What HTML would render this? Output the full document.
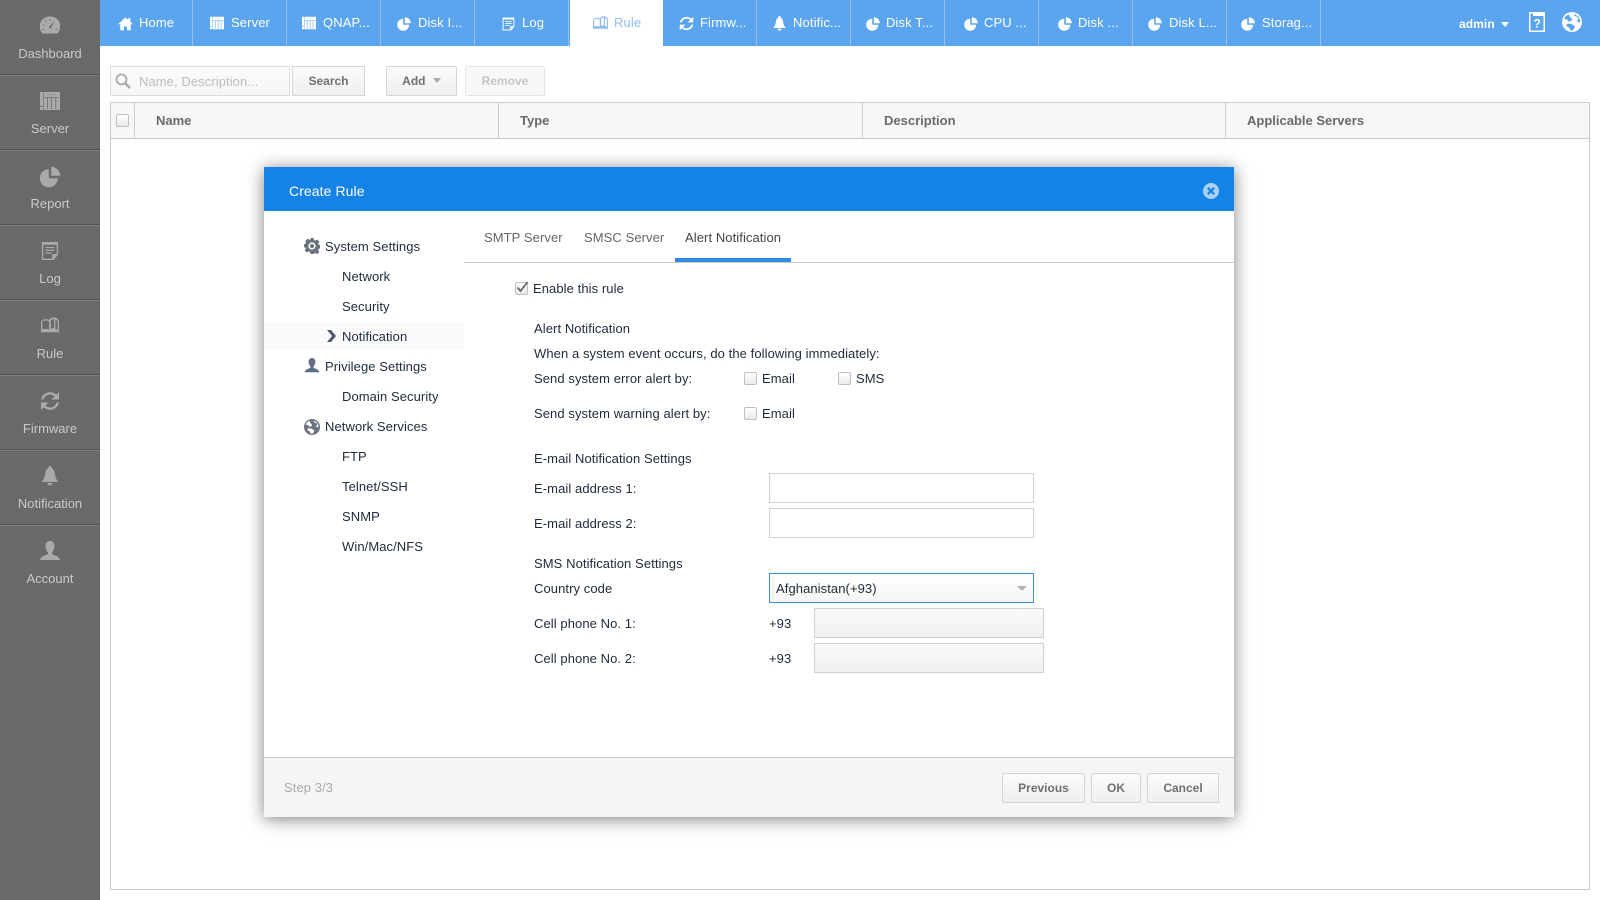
<!DOCTYPE html>
<html><head><meta charset="utf-8"><title>Create Rule</title>
<style>
html,body{margin:0;padding:0}
body{width:1600px;height:900px;overflow:hidden;position:relative;background:#fff;font:13px/20px "Liberation Sans",Arial,sans-serif;color:#222}
.a,.t{position:absolute;white-space:nowrap}
.t{height:20px;line-height:20px;margin-top:1px;letter-spacing:.08px}
svg{position:absolute;fill:currentColor;display:block}
#side{left:0;top:0;width:100px;height:900px;background:#6b6b6b;background-image:repeating-linear-gradient(45deg,rgba(0,0,0,.025) 0 1px,transparent 1px 2px)}
.sep{position:absolute;left:0;width:100px;height:1px;background:#525252;border-bottom:1px solid #7d7d7d}
.sl{position:absolute;left:0;width:100px;text-align:center;color:#c9c9c9;font-size:13px;line-height:20px;margin-top:1px}
.si{color:#aaa}
#top{left:100px;top:0;width:1500px;height:46px;background:#5aa5ee}
.ts{position:absolute;top:0;width:1px;height:46px;background:#8fc0ec}
.tt{color:#fff;font-size:13px;top:13px;margin-top:0;letter-spacing:.12px}
.ti{color:#fff}
.btn{position:absolute;box-sizing:border-box;height:30px;border:1px solid #d5d5d5;border-radius:2px;background:linear-gradient(#fbfbfb,#efefef);text-align:center;font-weight:bold;font-size:12px;line-height:28px;color:#707070}
.cb{position:absolute;box-sizing:border-box;width:13px;height:13px;border:1px solid #c0c0c0;border-radius:2px;background:linear-gradient(#fff,#eaeaea)}
.inp{position:absolute;box-sizing:border-box;height:30px;border:1px solid #d0d0d0;background:#fff}
.gr{background:linear-gradient(#fafafa,#f0f0f0)}
.th{font-weight:bold;color:#6a6a6a;top:110px;letter-spacing:0}
.n{color:#1f2a3a}
</style></head><body>
<svg width="0" height="0" style="position:absolute">
<defs>
<symbol id="pie" viewBox="0 0 20 20"><path d="M9 3.500a7.500 7.500 0 1 0 7.500 7.500H9z"/><path d="M11 1.500a7.500 7.500 0 0 1 7.500 7.500H11z"/></symbol>
<symbol id="srv" viewBox="0 0 20 20"><path fill-rule="evenodd" d="M0 1h20v18H0zM3 1v18h.6V1zM4 6v.8h15V6zM7 7v11h.8V7zM11.2 7v11h.8V7zM15.4 7v11h.8V7zM0 15v.8h3V15zM8 3v.8h1V3zM11 3v.8h1V3zM14 3v.8h1V3z"/></symbol>
<symbol id="log" viewBox="0 0 20 20"><path fill-rule="evenodd" d="M1 0h18v14l-5 6H1zM2.500 3v15.500h10V13.500h5V3zM5 5.500h10v1.300H5zM5 8.500h10v1.300H5zM5 11.500h7v1.300H5z"/></symbol>
<symbol id="book" viewBox="0 0 20 20"><path fill-rule="evenodd" d="M0 17V6q0-3 4-3.500T9.500 4V2q3-2 6-1.500t4.500 4V17zM1.500 14q4-1.500 7.500 0V5Q6.500 3.500 3.500 4T1.500 6.500zM11 13q2-.8 3.500-.5V2.500Q12.500 2 11 3.500zM16 3v10.500l2.500.7V6q0-2.500-2.500-3z"/></symbol>
<symbol id="ref" viewBox="0 0 20 20"><path d="M17 6.500A8 8 0 0 0 2.200 8.500M3 13.500A8 8 0 0 0 17.800 11.500" fill="none" stroke="currentColor" stroke-width="2.400"/><path d="M19 1v7.500h-7.500zM1 19v-7.500h7.500z"/></symbol>
<symbol id="bell" viewBox="0 0 20 20"><path d="M10 0a1.500 1.500 0 0 1 1.500 2C14 3 14.500 6 15 9s2 5.500 3.500 7h-17C3 14.500 4.500 12 5 9s1-6 3.500-7A1.500 1.500 0 0 1 10 0z"/><path d="M7.500 17h5a2.500 2.500 0 0 1-5 0z"/></symbol>
<symbol id="usr" viewBox="0 0 20 20"><path d="M10 0c3 0 4.500 2.200 4.500 5s-1.500 5.500-2.500 6.500v1.500c2.500 1.500 7 2 8 6H0c1-4 5.500-4.500 8-6v-1.500C7 10.500 5.500 7.800 5.500 5S7 0 10 0z"/></symbol>
<symbol id="gau" viewBox="0 0 20 20"><path fill-rule="evenodd" d="M10 .5a10 10 0 0 1 7.500 17h-15A10 10 0 0 1 10 .5zM14.800 4.500L8.800 11.500l1.800 1.300zM9.600 3v2h.8V3zM5 4.800l1 1.600.7-.4-1-1.600zM2.800 9l1.800.8.3-.7-1.800-.8zM2.500 13v.8h2V13zM15.500 13v.8h2V13z"/></symbol>
<symbol id="home" viewBox="0 0 20 20"><path d="M10 2L0 11h3v8h5v-5h4v5h5v-8h3l-3.500-3.200V3h-3v2.100z"/></symbol>
<symbol id="gear" viewBox="0 0 20 20"><path fill-rule="evenodd" d="M8 0h4l.5 2.600 1.700.7L16.400 1.800l2.800 2.800-1.500 2.200.7 1.700 2.600.5v4l-2.600.5-.7 1.700 1.500 2.200-2.800 2.800-2.200-1.500-1.700.7L12 20H8l-.5-2.600-1.700-.7-2.200 1.500-2.800-2.800 1.500-2.200-.7-1.700L-1 12V8l2.600-.5.7-1.700L1.800 3.600l2.800-2.800 2.200 1.500 1.700-.7zM10 5.500a4.500 4.500 0 1 0 0 9 4.500 4.500 0 0 0 0-9zM10 7.500a2.500 2.500 0 1 1 0 5 2.500 2.500 0 0 1 0-5z"/></symbol>
<symbol id="glb" viewBox="0 0 20 20"><path fill-rule="evenodd" d="M10 0a10 10 0 1 1 0 20 10 10 0 0 1 0-20zM7 2.200Q3.500 3.500 2 7l3 .5 1.500 2 3-.5.500-2.500L8 5.500zM12 2l.5 2 3 1 1 2.500-2 1.500 2.500 1.500 1-.5Q18.500 4.500 12 2zM6 11.500Q4 12 4.500 14l3 2 1 2.500q2.500.5 3-1l1.500-3-3.500-2.500z"/></symbol>
</defs></svg>

<div id="side" class="a">
<div class="sep" style="top:74px"></div><div class="sep" style="top:149px"></div><div class="sep" style="top:224px"></div><div class="sep" style="top:299px"></div><div class="sep" style="top:374px"></div><div class="sep" style="top:449px"></div><div class="sep" style="top:524px"></div>
<svg class="si" style="left:40px;top:16px" width="20" height="20"><use href="#gau"/></svg><div class="sl" style="top:43px">Dashboard</div>
<svg class="si" style="left:40px;top:91px" width="20" height="20"><use href="#srv"/></svg><div class="sl" style="top:118px">Server</div>
<svg class="si" style="left:38px;top:165px" width="24" height="24"><use href="#pie"/></svg><div class="sl" style="top:193px">Report</div>
<svg class="si" style="left:41px;top:241px" width="18" height="20"><use href="#log"/></svg><div class="sl" style="top:268px">Log</div>
<svg class="si" style="left:40px;top:317px" width="20" height="18"><use href="#book"/></svg><div class="sl" style="top:343px">Rule</div>
<svg class="si" style="left:40px;top:391px" width="20" height="20"><use href="#ref"/></svg><div class="sl" style="top:418px">Firmware</div>
<svg class="si" style="left:40px;top:466px" width="20" height="20"><use href="#bell"/></svg><div class="sl" style="top:493px">Notification</div>
<svg class="si" style="left:40px;top:541px" width="20" height="20"><use href="#usr"/></svg><div class="sl" style="top:568px">Account</div>
</div>

<div id="top" class="a"></div>
<div class="ts" style="left:192px"></div><div class="ts" style="left:286px"></div><div class="ts" style="left:380px"></div><div class="ts" style="left:474px"></div><div class="ts" style="left:568px"></div>
<div class="ts" style="left:756px"></div><div class="ts" style="left:850px"></div><div class="ts" style="left:944px"></div><div class="ts" style="left:1038px"></div><div class="ts" style="left:1132px"></div><div class="ts" style="left:1226px"></div><div class="ts" style="left:1320px"></div>
<div class="a" style="left:570px;top:0;width:93px;height:46px;background:#fff"></div>

<svg class="ti" style="left:118px;top:16px" width="15" height="15"><use href="#home"/></svg><div class="t tt" style="left:139px">Home</div>
<svg class="ti" style="left:210px;top:16px" width="14" height="14"><use href="#srv"/></svg><div class="t tt" style="left:231px">Server</div>
<svg class="ti" style="left:302px;top:16px" width="14" height="14"><use href="#srv"/></svg><div class="t tt" style="left:323px">QNAP...</div>
<svg class="ti" style="left:396px;top:16px" width="16" height="16"><use href="#pie"/></svg><div class="t tt" style="left:418px">Disk I...</div>
<svg class="ti" style="left:502px;top:17px" width="13" height="14"><use href="#log"/></svg><div class="t tt" style="left:522px">Log</div>
<svg style="left:593px;top:16px;color:#8fbdf0" width="15" height="15"><use href="#book"/></svg><div class="t tt" style="left:614px;color:#8fbdf0">Rule</div>
<svg class="ti" style="left:679px;top:16px" width="15" height="15"><use href="#ref"/></svg><div class="t tt" style="left:700px">Firmw...</div>
<svg class="ti" style="left:772px;top:16px" width="15" height="15"><use href="#bell"/></svg><div class="t tt" style="left:793px">Notific...</div>
<svg class="ti" style="left:865px;top:16px" width="16" height="16"><use href="#pie"/></svg><div class="t tt" style="left:886px">Disk T...</div>
<svg class="ti" style="left:963px;top:16px" width="16" height="16"><use href="#pie"/></svg><div class="t tt" style="left:984px">CPU ...</div>
<svg class="ti" style="left:1057px;top:16px" width="16" height="16"><use href="#pie"/></svg><div class="t tt" style="left:1078px">Disk ...</div>
<svg class="ti" style="left:1147px;top:16px" width="16" height="16"><use href="#pie"/></svg><div class="t tt" style="left:1169px">Disk L...</div>
<svg class="ti" style="left:1240px;top:16px" width="16" height="16"><use href="#pie"/></svg><div class="t tt" style="left:1262px">Storag...</div>
<div class="t" style="left:1459px;top:13px;color:#fff;font-weight:bold;font-size:12px">admin</div>
<div class="a" style="left:1501px;top:22px;width:0;height:0;border:4px solid transparent;border-top:5px solid #fff;border-bottom:0"></div>
<svg class="ti" style="left:1529px;top:12px" width="16" height="20" viewBox="0 0 16 20"><path fill-rule="evenodd" d="M0 0h16v20H0zM1.500 1.500v17H14.500V4H4V1.500z"/><text x="4.500" y="15.500" font-family="Liberation Sans" font-size="12" font-weight="bold">?</text></svg>
<svg class="ti" style="left:1562px;top:12px" width="20" height="20"><use href="#glb"/></svg>

<div class="a" style="box-sizing:border-box;left:110px;top:66px;width:180px;height:30px;border:1px solid #ddd;background:linear-gradient(#fbfbfb,#f6f6f6)"></div>
<svg style="left:115px;top:73px;color:#aaa" width="16" height="16" viewBox="0 0 16 16"><circle cx="6.500" cy="6.500" r="5" fill="none" stroke="currentColor" stroke-width="1.800"/><path d="M10 10l5 5" stroke="currentColor" stroke-width="2.500"/></svg>
<div class="t" style="left:139px;top:71px;color:#bdbdbd">Name, Description...</div>
<div class="btn" style="left:292px;top:66px;width:73px;border-radius:0">Search</div>
<div class="btn" style="left:386px;top:66px;width:71px">Add <span style="display:inline-block;width:0;height:0;border:4px solid transparent;border-top:5px solid #aaa;border-bottom:0;margin-left:4px;vertical-align:2px"></span></div>
<div class="btn" style="left:465px;top:66px;width:80px;color:#c4c4c4;border-color:#e6e6e6;background:#f8f8f8">Remove</div>

<div class="a" style="box-sizing:border-box;left:110px;top:102px;width:1480px;height:788px;border:1px solid #ccc;background:#fff"></div>
<div class="a" style="box-sizing:border-box;left:110px;top:102px;width:1480px;height:37px;border:1px solid #ccc;background:#f7f7f7"></div>
<div class="a" style="left:134px;top:103px;width:1px;height:35px;background:#ccc"></div>
<div class="a" style="left:498px;top:103px;width:1px;height:35px;background:#ccc"></div>
<div class="a" style="left:862px;top:103px;width:1px;height:35px;background:#ccc"></div>
<div class="a" style="left:1225px;top:103px;width:1px;height:35px;background:#ccc"></div>
<div class="cb" style="left:116px;top:114px"></div>
<div class="t th" style="left:156px">Name</div>
<div class="t th" style="left:520px">Type</div>
<div class="t th" style="left:884px">Description</div>
<div class="t th" style="left:1247px">Applicable Servers</div>

<div class="a" style="left:264px;top:167px;width:970px;height:650px;background:#fff;box-shadow:0 2px 16px rgba(0,0,0,.5)"></div>
<div class="a" style="left:264px;top:167px;width:970px;height:44px;background:#1583e6"></div>
<div class="t" style="left:289px;top:180px;color:#fff;font-size:14px">Create Rule</div>
<svg style="left:1203px;top:183px" width="16" height="16" viewBox="0 0 16 16"><circle cx="8" cy="8" r="8" fill="#a9d0f5"/><path d="M4.800 4.800l6.400 6.400M11.200 4.800l-6.400 6.400" stroke="#1583e6" stroke-width="2.200"/></svg>

<div class="a" style="left:264px;top:322px;width:200px;height:28px;background:#fafafa"></div>
<svg style="left:304px;top:238px;color:#6a7280" width="16" height="16"><use href="#gear"/></svg><div class="t n" style="left:325px;top:236px">System Settings</div>
<div class="t n" style="left:342px;top:266px">Network</div>
<div class="t n" style="left:342px;top:296px">Security</div>
<svg style="left:327px;top:330px;color:#4f5a6b" width="9" height="12" viewBox="0 0 9 12"><path d="M0 0h4l5 6-5 6H0l5-6z"/></svg><div class="t n" style="left:342px;top:326px">Notification</div>
<svg style="left:304px;top:358px;color:#5f6f82" width="16" height="15"><use href="#usr"/></svg><div class="t n" style="left:325px;top:356px">Privilege Settings</div>
<div class="t n" style="left:342px;top:386px">Domain Security</div>
<svg style="left:304px;top:419px;color:#6a7280" width="16" height="16"><use href="#glb"/></svg><div class="t n" style="left:325px;top:416px">Network Services</div>
<div class="t n" style="left:342px;top:446px">FTP</div>
<div class="t n" style="left:342px;top:476px">Telnet/SSH</div>
<div class="t n" style="left:342px;top:506px">SNMP</div>
<div class="t n" style="left:342px;top:536px">Win/Mac/NFS</div>

<div class="a" style="left:464px;top:262px;width:770px;height:1px;background:#ccc"></div>
<div class="a" style="left:675px;top:258px;width:116px;height:4px;background:#2f8ae0"></div>
<div class="t" style="left:484px;top:227px;color:#666">SMTP Server</div>
<div class="t" style="left:584px;top:227px;color:#666">SMSC Server</div>
<div class="t" style="left:685px;top:227px;color:#444">Alert Notification</div>

<div class="cb" style="left:515px;top:282px"></div>
<svg style="left:515px;top:280px" width="14" height="14" viewBox="0 0 14 14"><path d="M2.500 7.500l3 3.500L12.500 2" fill="none" stroke="#666" stroke-width="1.800"/></svg>
<div class="t n" style="left:533px;top:278px">Enable this rule</div>
<div class="t n" style="left:534px;top:318px">Alert Notification</div>
<div class="t n" style="left:534px;top:343px">When a system event occurs, do the following immediately:</div>
<div class="t n" style="left:534px;top:368px">Send system error alert by:</div>
<div class="cb" style="left:744px;top:372px"></div><div class="t n" style="left:762px;top:368px">Email</div>
<div class="cb" style="left:838px;top:372px"></div><div class="t n" style="left:856px;top:368px">SMS</div>
<div class="t n" style="left:534px;top:403px">Send system warning alert by:</div>
<div class="cb" style="left:744px;top:407px"></div><div class="t n" style="left:762px;top:403px">Email</div>

<div class="t n" style="left:534px;top:448px">E-mail Notification Settings</div>
<div class="t n" style="left:534px;top:478px">E-mail address 1:</div><div class="inp" style="left:769px;top:473px;width:265px"></div>
<div class="t n" style="left:534px;top:513px">E-mail address 2:</div><div class="inp" style="left:769px;top:508px;width:265px"></div>
<div class="t n" style="left:534px;top:553px">SMS Notification Settings</div>
<div class="t n" style="left:534px;top:578px">Country code</div>
<div class="inp" style="left:769px;top:573px;width:265px;border-color:#3d8fdc;background:linear-gradient(#fff,#f5f5f5)"></div>
<div class="t n" style="left:776px;top:578px">Afghanistan(+93)</div>
<div class="a" style="left:1017px;top:586px;width:0;height:0;border:5px solid transparent;border-top:5px solid #b5b5b5;border-bottom:0"></div>
<div class="t n" style="left:534px;top:613px">Cell phone No. 1:</div><div class="t n" style="left:769px;top:613px">+93</div><div class="inp gr" style="left:814px;top:608px;width:230px"></div>
<div class="t n" style="left:534px;top:648px">Cell phone No. 2:</div><div class="t n" style="left:769px;top:648px">+93</div><div class="inp gr" style="left:814px;top:643px;width:230px"></div>

<div class="a" style="box-sizing:border-box;left:264px;top:757px;width:970px;height:60px;background:#f5f5f5;border-top:1px solid #ccc"></div>
<div class="t" style="left:284px;top:777px;color:#aaa">Step 3/3</div>
<div class="btn" style="left:1002px;top:773px;width:83px">Previous</div>
<div class="btn" style="left:1091px;top:773px;width:50px">OK</div>
<div class="btn" style="left:1147px;top:773px;width:72px">Cancel</div>
</body></html>
